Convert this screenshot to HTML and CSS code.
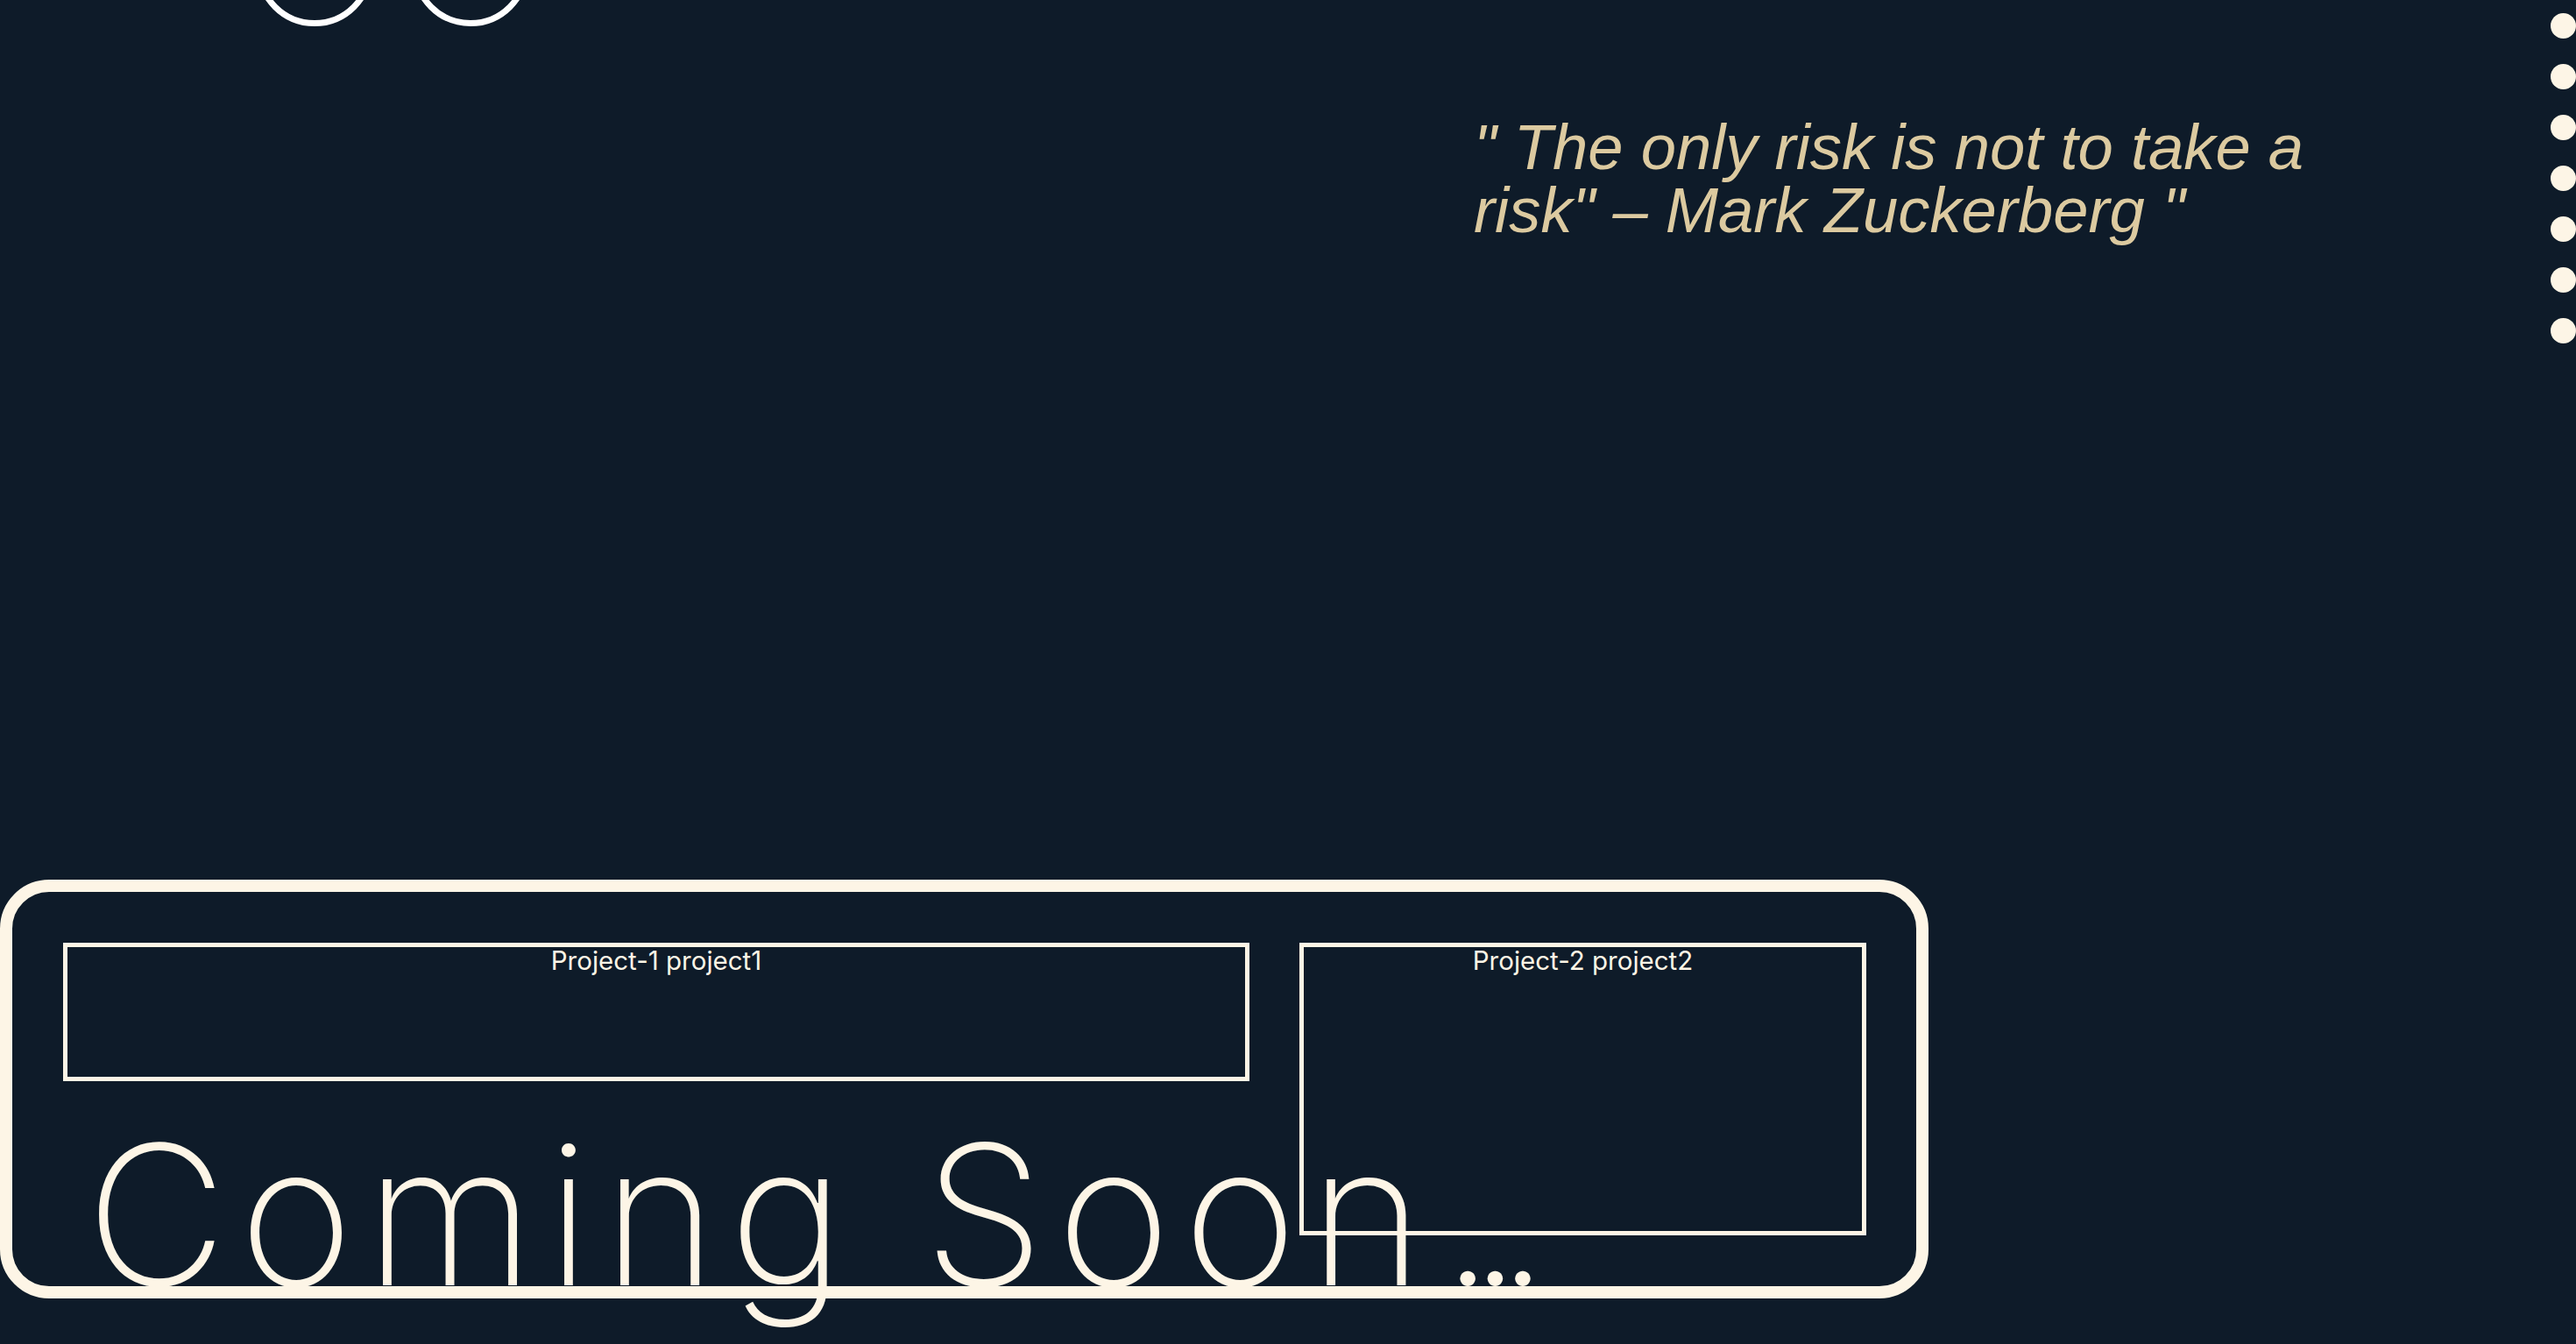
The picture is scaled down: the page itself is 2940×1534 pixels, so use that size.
FILE: index.html
```html
<!DOCTYPE html>
<html lang="en">
<head>
<meta charset="utf-8">
<title>Portfolio</title>
<link rel="stylesheet" href="styles.css">
</head>
<body>
<main class="page">
  <section class="hero">
    <div class="logo">
      <span class="ring"></span>
      <span class="ring"></span>
    </div>
    <blockquote class="quote">" The only risk is not to take a risk" – Mark Zuckerberg "</blockquote>
    <nav class="dots">
      <span class="dot"></span>
      <span class="dot"></span>
      <span class="dot"></span>
      <span class="dot"></span>
      <span class="dot"></span>
      <span class="dot"></span>
      <span class="dot"></span>
    </nav>
  </section>
  <section class="projects">
    <div class="grid">
      <article class="card card-wide"><h2 class="card-title">Project-1 project1</h2></article>
      <article class="card card-tall"><h2 class="card-title">Project-2 project2</h2></article>
    </div>
    <h1 class="soon">Coming Soon<span class="ellipsis">...</span></h1>
  </section>
</main>
</body>
</html>
```
FILE: styles.css
```css
html {
  margin: 0;
  padding: 0;
  overflow: hidden;
}
body {
  margin: 0;
  padding: 0;
  min-height: 100vh;
  background: #0e1b29;
  color: #fdf5e6;
}
.page {
  width: 2940px;
}
.hero {
  display: grid;
  grid-template-columns: 1682px 1fr 29px;
  height: 1004px;
  align-items: start;
}
.logo {
  display: flex;
  gap: 44px;
  padding-left: 292px;
  margin-top: -104px;
}
.ring {
  width: 134px;
  height: 134px;
  box-sizing: border-box;
  border: 7px solid #ffffff;
  border-radius: 50%;
}
.quote {
  margin: 132px 0 0;
  max-width: 1000px;
  font-family: "Liberation Sans", Arial, sans-serif;
  font-style: italic;
  font-size: 72.4px;
  line-height: 72px;
  color: #dccaa0;
}
.dots {
  display: flex;
  flex-direction: column;
  gap: 29px;
  margin-top: 15px;
}
.dot {
  width: 29px;
  height: 29px;
  border-radius: 50%;
  background: #fdf5e6;
}
.projects {
  width: 2201px;
  height: 478px;
  box-sizing: border-box;
  border: 14px solid #fdf5e6;
  border-radius: 56px;
  padding: 58px 0 0 58px;
}
.grid {
  display: grid;
  grid-template-columns: 1354px 647px;
  column-gap: 57px;
  align-items: start;
}
.card {
  box-sizing: border-box;
  border: 5px solid #fdf5e6;
  text-align: center;
}
.card-wide {
  height: 158px;
}
.card-tall {
  height: 334px;
}
.card-title {
  margin: 0;
  font-family: Inter, "Open Sans", sans-serif;
  font-weight: 400;
  font-size: 29.5px;
  line-height: 30px;
  color: #fdf5e6;
}
.soon {
  margin: -133px 0 0 26px;
  font-family: Inter, "Open Sans", sans-serif;
  font-weight: 200;
  font-size: 222px;
  line-height: 220px;
  letter-spacing: 14px;
  white-space: nowrap;
  color: #fdf5e6;
}
.ellipsis {
  letter-spacing: -30px;
  margin-left: 6px;
}
```
